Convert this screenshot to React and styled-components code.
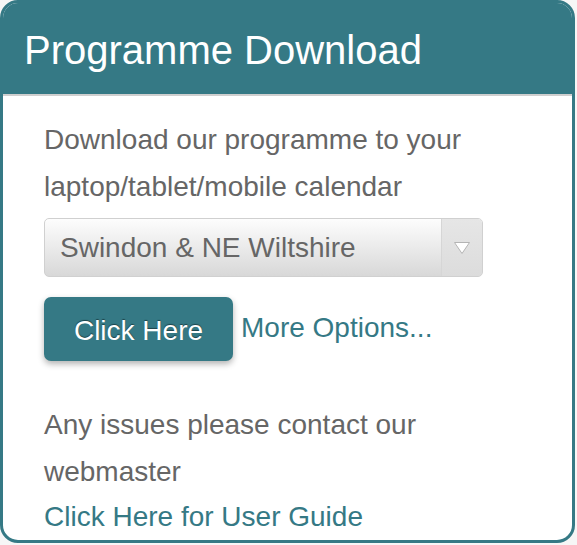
import styled, { createGlobalStyle } from "styled-components";

const teal = "#357985";

const GlobalStyle = createGlobalStyle`
  html, body {
    margin: 0;
    padding: 0;
    background: #f6f6f6;
    font-family: "Liberation Sans", Arial, sans-serif;
  }
`;

const Panel = styled.div`
  box-sizing: border-box;
  width: 575px;
  height: 543px;
  border: 3px solid ${teal};
  border-radius: 18px;
  background: #fff;
  overflow: hidden;
`;

const Header = styled.div`
  height: 93px;
  background: ${teal};
  border-bottom: 2px solid #cfcfcf;
  display: flex;
  align-items: center;
  padding: 0 21px;
  box-sizing: border-box;
`;

const Title = styled.h2`
  margin: 0;
  color: #fff;
  font-weight: normal;
  font-size: 40px;
  padding-top: 4px;
`;

const Body = styled.div`
  padding: 20px 41px 0;
  color: #666;
  font-size: 28px;
  line-height: 47px;
`;

const Text = styled.p`
  margin: 0;
`;

const Select = styled.div`
  margin-top: 8px;
  width: 439px;
  height: 59px;
  box-sizing: border-box;
  border: 1px solid #d0d0d0;
  border-radius: 5px;
  background: linear-gradient(#fdfdfd, #d8d8d8);
  display: flex;
  align-items: stretch;
  overflow: hidden;
`;

const SelectLabel = styled.span`
  flex: 1;
  display: flex;
  align-items: center;
  padding-left: 15px;
  color: #666;
`;

const Caret = styled.span`
  width: 40px;
  border-left: 1px solid #d6d6d6;
  background: linear-gradient(#e6e6e6, #dcdcdc);
  display: flex;
  align-items: center;
  justify-content: center;
`;

const Actions = styled.div`
  margin-top: 20px;
  display: flex;
  align-items: center;
  gap: 8px;
`;

const Button = styled.button`
  width: 189px;
  height: 64px;
  border: none;
  border-radius: 7px;
  background: ${teal};
  color: #fff;
  font-family: inherit;
  font-size: 28px;
  padding: 3px 0 0;
  text-shadow: 0 -1px 1px rgba(0, 0, 0, 0.45);
  box-shadow: 0 3px 6px rgba(0, 0, 0, 0.3);
`;

const Link = styled.a`
  display: block;
  color: ${teal};
  text-decoration: none;
  margin-top: ${(p) => p.$offset || 0}px;
`;

const Issues = styled(Text)`
  margin-top: 40px;
`;

export default function App() {
  return (
    <>
      <GlobalStyle />
      <Panel>
        <Header>
          <Title>Programme Download</Title>
        </Header>
        <Body>
          <Text>
            Download our programme to your
            <br />
            laptop/tablet/mobile calendar
          </Text>
          <Select>
            <SelectLabel>Swindon &amp; NE Wiltshire</SelectLabel>
            <Caret>
              <svg width="18" height="14" viewBox="0 0 18 14">
                <path d="M1.5 1.5h15L9 12.5z" fill="#fff" stroke="#b4b4b4" strokeWidth="1" strokeLinejoin="round" />
              </svg>
            </Caret>
          </Select>
          <Actions>
            <Button>Click Here</Button>
            <Link href="#" $offset={-4}>More Options...</Link>
          </Actions>
          <Issues>
            Any issues please contact our
            <br />
            webmaster
          </Issues>
          <Link href="#" $offset={-2}>Click Here for User Guide</Link>
        </Body>
      </Panel>
    </>
  );
}
